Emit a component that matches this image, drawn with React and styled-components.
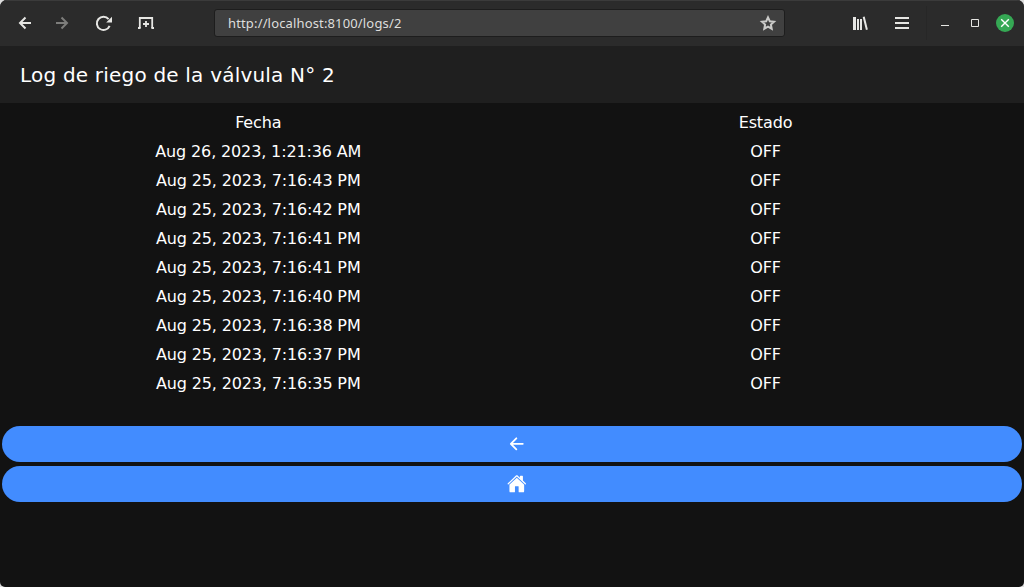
import React from 'react';
import styled, { createGlobalStyle } from 'styled-components';
import { IoArrowBack, IoHome } from 'react-icons/io5';

const GlobalStyle = createGlobalStyle`
  * { box-sizing: border-box; }
  body { margin: 0; background: #dcdcdc; font-family: "DejaVu Sans", sans-serif; }
`;

const Window = styled.div`
  display: flex;
  flex-direction: column;
  height: 587px;
  overflow: hidden;
  border-radius: 7px 7px 5px 5px;
  background: #121212;
  color: #fff;
`;

const BrowserBar = styled.header`
  display: flex;
  align-items: center;
  height: 46px;
  flex: none;
  padding: 0 10px 0 15px;
  background: #2b2b2b;
  box-shadow: inset 0 1px #3b3b3b;
  color: #e6e6e3;
`;

const Glyph = styled.svg`
  display: block;
  flex: none;
  width: 20px;
  height: 20px;
  fill: none;
  stroke: currentColor;
  stroke-width: 2;
`;

const Navigation = styled.nav`
  display: flex;
  align-items: center;
  width: 199px;
`;

const ToolButton = styled.button`
  display: flex;
  padding: 0;
  border: 0;
  background: none;
  color: ${(p) => (p.$dim ? '#7d7d7b' : 'inherit')};
  margin-right: ${(p) => p.$gap || 0}px;
`;

const AddressBar = styled.div`
  display: flex;
  align-items: center;
  justify-content: space-between;
  width: 571px;
  height: 28px;
  padding: 0 6px 0 13px;
  border: 1px solid #1d1d1d;
  border-radius: 3px;
  background: #404040;
  color: #dededc;
  font: 13px/26px "Noto Sans", sans-serif;
  letter-spacing: 0.15px;
`;

const Controls = styled.div`
  display: flex;
  align-items: center;
  margin-left: auto;
`;

const Divider = styled.span`
  width: 1px;
  height: 34px;
  margin-right: 8px;
  background: #272727;
`;

const CloseButton = styled(ToolButton)`
  width: 18px;
  height: 18px;
  border-radius: 50%;
  background: #35a854;
  color: #fff;
`;

const Toolbar = styled.div`
  display: flex;
  align-items: center;
  flex: none;
  height: 57px;
  padding: 0 20px;
  background: #1f1f1f;
`;

const Title = styled.h1`
  margin: 0;
  font-size: 20px;
  font-weight: 400;
  line-height: 24px;
  letter-spacing: 0.2px;
`;

const LogTable = styled.div`
  padding-top: 5px;
`;

const LogRow = styled.div`
  display: grid;
  grid-template-columns: 516.5px 498px;
  height: 29px;
  line-height: 29px;
  font-size: 16px;
  letter-spacing: -0.14px;
  text-align: center;
`;

const Actions = styled.div`
  display: flex;
  flex-direction: column;
  gap: 4px;
  padding: 28px 2px 0;
`;

const ActionButton = styled.button`
  display: flex;
  align-items: center;
  justify-content: center;
  height: 36px;
  padding: 0 0 0 9px;
  border: 0;
  border-radius: 18px;
  background: #428cff;
  color: #fff;
  font-size: 19.6px;
`;

const dates = [
  'Aug 26, 2023, 1:21:36 AM',
  'Aug 25, 2023, 7:16:43 PM',
  'Aug 25, 2023, 7:16:42 PM',
  'Aug 25, 2023, 7:16:41 PM',
  'Aug 25, 2023, 7:16:41 PM',
  'Aug 25, 2023, 7:16:40 PM',
  'Aug 25, 2023, 7:16:38 PM',
  'Aug 25, 2023, 7:16:37 PM',
  'Aug 25, 2023, 7:16:35 PM',
];

export default function App() {
  return (
    <>
      <GlobalStyle />
      <Window>
        <BrowserBar>
          <Navigation>
            <ToolButton $gap={17} aria-label="Back">
              <Glyph viewBox="0 0 20 20"><path d="M16 10H5.5M10.5 4.5L5 10l5.5 5.5" /></Glyph>
            </ToolButton>
            <ToolButton $dim $gap={22} aria-label="Forward">
              <Glyph viewBox="0 0 20 20"><path d="M4 10h10.5M9.5 4.5L15 10l-5.5 5.5" /></Glyph>
            </ToolButton>
            <ToolButton $gap={22} aria-label="Reload">
              <Glyph viewBox="0 0 20 20">
                <path d="M14.6 6.2A6.6 6.6 0 1 0 15.6 12.8" />
                <path d="M18 3.7v5.8h-5.8z" fill="currentColor" stroke="none" />
              </Glyph>
            </ToolButton>
            <ToolButton aria-label="New tab">
              <Glyph viewBox="0 0 20 20">
                <path d="M3.8 15V5h12.4v10M10 8v6M7 11h6" strokeWidth="1.8" />
                <path d="M2 14h2.6v2H2zM15.4 14H18v2h-2.6z" fill="currentColor" stroke="none" />
              </Glyph>
            </ToolButton>
          </Navigation>
          <AddressBar>
            <span>http://localhost:8100/logs/2</span>
            <Glyph viewBox="0 0 20 20">
              <path d="M10 4.3l1.8 3.9 4.2.5-3.1 2.8.8 4.2-3.7-2.1-3.7 2.1.8-4.2L4 8.7l4.2-.5z" stroke="#cbcbc9" />
            </Glyph>
          </AddressBar>
          <Controls>
            <ToolButton $gap={22} aria-label="Library">
              <Glyph viewBox="0 0 20 20">
                <path d="M8 6v11M11 6v11M13.7 3.7l3.2 13" />
                <path d="M3 4h3v13H3z" fill="currentColor" stroke="none" />
              </Glyph>
            </ToolButton>
            <ToolButton $gap={14} aria-label="Menu">
              <Glyph viewBox="0 0 20 20"><path d="M3 5h14M3 10h14M3 15h14" /></Glyph>
            </ToolButton>
            <Divider />
            <ToolButton $gap={10} aria-label="Minimize">
              <Glyph viewBox="0 0 20 20"><path d="M6 12.5h8" strokeWidth="1" /></Glyph>
            </ToolButton>
            <ToolButton $gap={11} aria-label="Maximize">
              <Glyph viewBox="0 0 20 20"><path d="M6.5 6.5h7v7h-7z" strokeWidth="1" /></Glyph>
            </ToolButton>
            <CloseButton aria-label="Close">
              <Glyph viewBox="1 1 20 20"><path d="M6.2 6.2l7.6 7.6M13.8 6.2l-7.6 7.6" strokeWidth="1.4" /></Glyph>
            </CloseButton>
          </Controls>
        </BrowserBar>
        <Toolbar>
          <Title>Log de riego de la válvula N° 2</Title>
        </Toolbar>
        <LogTable>
          <LogRow><span>Fecha</span><span>Estado</span></LogRow>
          {dates.map((date, i) => (
            <LogRow key={i}><span>{date}</span><span>OFF</span></LogRow>
          ))}
        </LogTable>
        <Actions>
          <ActionButton aria-label="Volver"><IoArrowBack /></ActionButton>
          <ActionButton aria-label="Inicio"><IoHome /></ActionButton>
        </Actions>
      </Window>
    </>
  );
}
